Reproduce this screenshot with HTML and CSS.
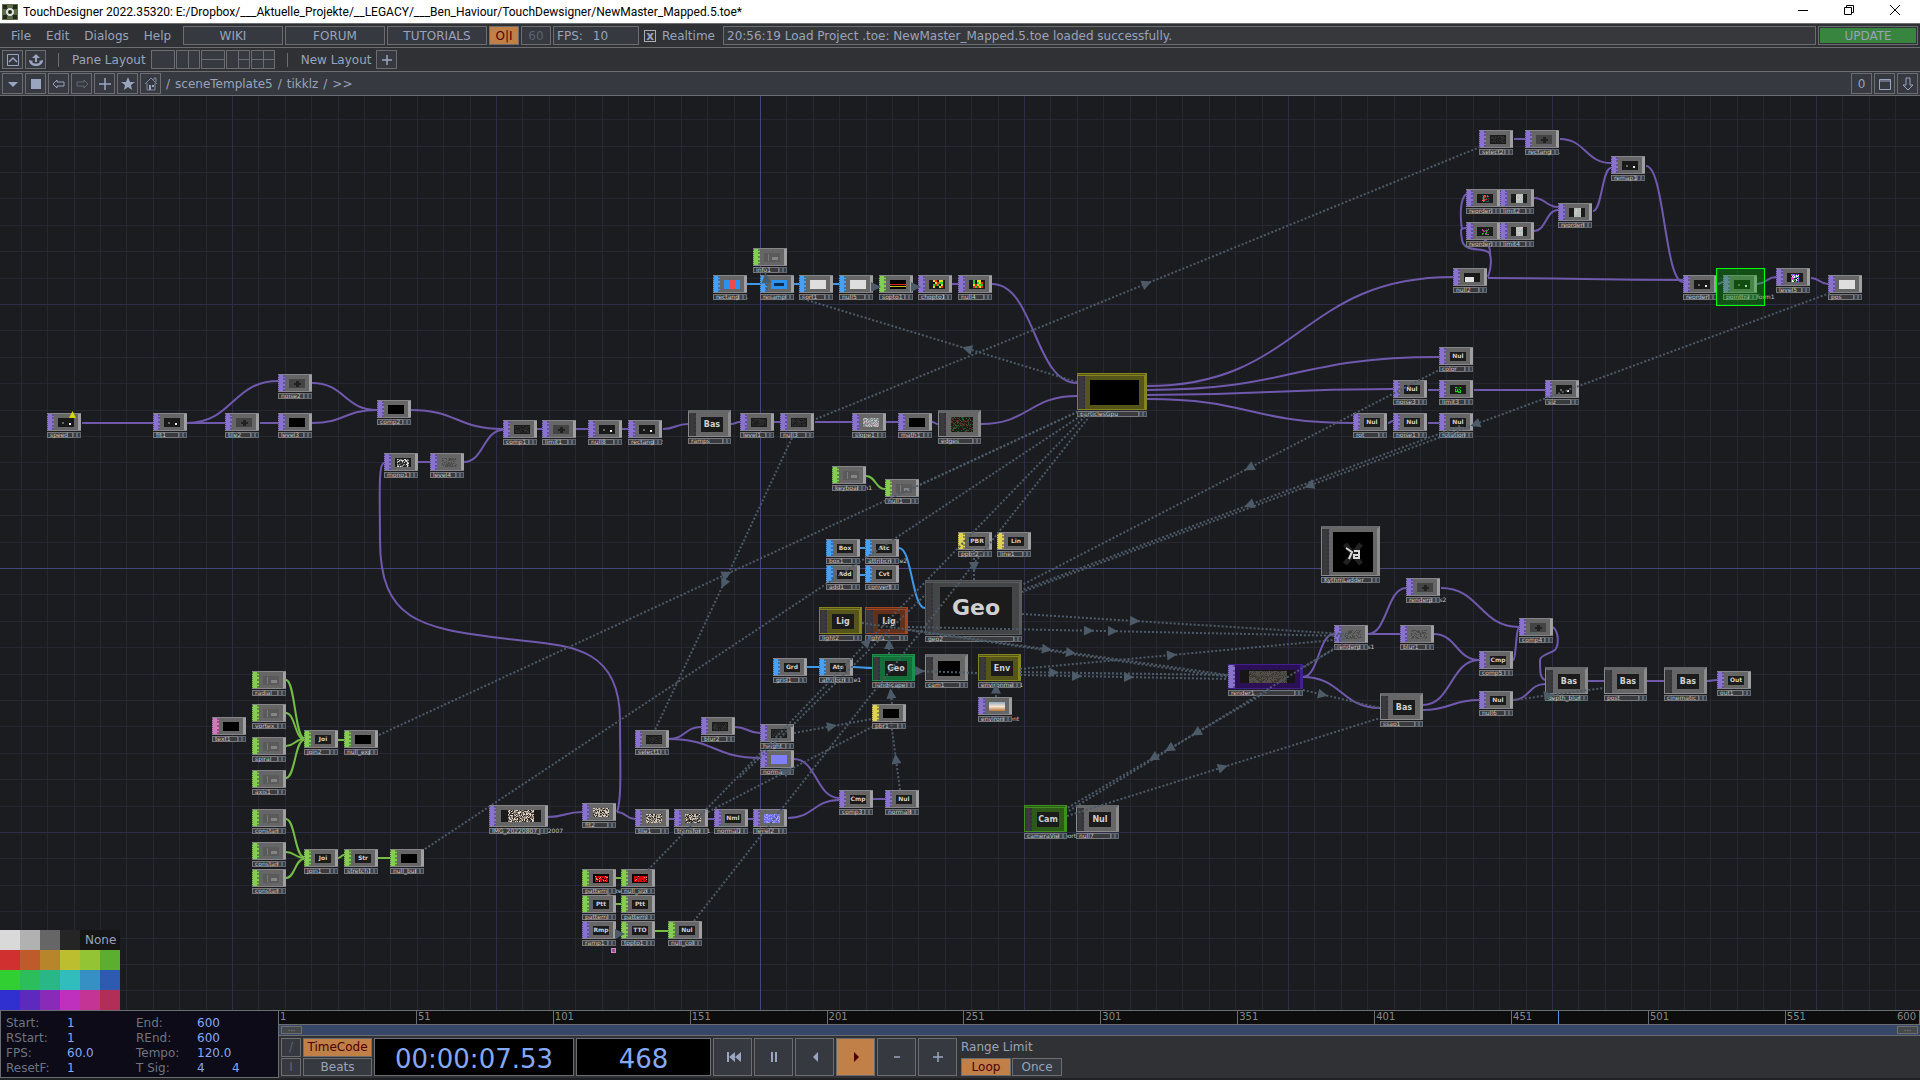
FILE: index.html
```html
<!DOCTYPE html>
<html lang="en">
<head>
    <meta charset="UTF-8">
    <title>TouchDesigner 2022.35320</title>
    <link rel="stylesheet" href="styles.css">
</head>
<body>
    <!-- Window title -->
    <header class="titlebar">
        <svg class="app-icon" width="16" height="16" viewBox="0 0 16 16">
            <rect width="16" height="16" fill="#5d6b4a"/>
            <path d="M3 3l10 10M13 3L3 13" stroke="#15180f" stroke-width="2"/>
            <path d="M1 1h4v4H1zM11 1h4v4h-4zM1 11h4v4H1zM11 11h4v4h-4z" fill="#23281c"/>
            <circle cx="8" cy="8" r="4" fill="#dfe3d6"/>
            <circle cx="8" cy="8" r="2" fill="#23281c"/>
        </svg>
        <span class="window-title">TouchDesigner 2022.35320: E:/Dropbox/___Aktuelle_Projekte/__LEGACY/___Ben_Haviour/TouchDewsigner/NewMaster_Mapped.5.toe*</span>
        <div class="window-buttons">
            <button aria-label="Minimize"><svg width="12" height="12"><path d="M1 6.5h10" stroke="#000"/></svg></button>
            <button aria-label="Restore"><svg width="12" height="12" fill="none" stroke="#000"><path d="M1.5 3.5h7v7h-7zM3.5 3.5v-2h7v7h-2"/></svg></button>
            <button aria-label="Close"><svg width="12" height="12"><path d="M1 1l10 10M11 1L1 11" stroke="#000"/></svg></button>
        </div>
    </header>

    <!-- Menu bar -->
    <nav class="bar menubar">
        <div class="menus">
            <button class="menu">File</button>
            <button class="menu">Edit</button>
            <button class="menu">Dialogs</button>
            <button class="menu">Help</button>
        </div>
        <button class="box wide">WIKI</button>
        <button class="box wide">FORUM</button>
        <button class="box wide">TUTORIALS</button>
        <button class="box small active">O|I</button>
        <button class="box small dim">60</button>
        <div class="box fps"><span>FPS:</span><span>10</span></div>
        <label class="realtime" for="realtime"><input type="checkbox" id="realtime" checked>Realtime</label>
        <div class="box status">20:56:19 Load Project .toe: NewMaster_Mapped.5.toe loaded successfully.</div>
        <button class="box update">UPDATE</button>
    </nav>

    <!-- Pane layouts -->
    <div class="bar layoutbar">
        <button class="box icon" aria-label="Palette"><svg width="14" height="14" fill="none" stroke="#9aa5c0"><path d="M1.5 1.5h11v11h-11z"/><path d="M3 9l4-4 4 4" stroke-width="1.5"/></svg></button>
        <button class="box icon" aria-label="Export"><svg width="14" height="14"><path d="M6 4h2v5h-2zM3 5l4-4 4 4z" fill="#9aa5c0"/><path d="M0 7l4 1-1 1c2 2 6 2 8 0l-1-1 4-1c0 8-14 8-14 0z" fill="#9aa5c0"/></svg></button>
        <span class="divider"></span>
        <span class="caption">Pane Layout</span>
        <div class="layouts">
            <button class="box layout" aria-label="Single"></button>
            <button class="box layout" aria-label="Left right"><svg width="22" height="18"><path d="M11.5 0v18" stroke="#6b6d70"/></svg></button>
            <button class="box layout" aria-label="Top bottom"><svg width="22" height="18"><path d="M0 8.5h22" stroke="#6b6d70"/></svg></button>
            <button class="box layout" aria-label="Three"><svg width="22" height="18"><path d="M11.5 0v18M11 8.5h11" stroke="#6b6d70"/></svg></button>
            <button class="box layout" aria-label="Quad"><svg width="22" height="18"><path d="M11.5 0v18M0 8.5h22" stroke="#6b6d70"/></svg></button>
        </div>
        <span class="divider"></span>
        <span class="caption">New Layout</span>
        <button class="box icon" aria-label="Add layout"><svg width="14" height="14"><path d="M7 2v10M2 7h10" stroke="#9aa5c0" stroke-width="1.5"/></svg></button>
    </div>

    <!-- Network path -->
    <div class="bar pathbar">
        <button class="box icon" aria-label="Pane type"><svg width="14" height="14"><path d="M2 5h10L7 10z" fill="#9aa5c0"/></svg></button>
        <button class="box icon" aria-label="Stop"><svg width="14" height="14"><path d="M2 2h10v10H2z" fill="#9aa5c0"/></svg></button>
        <button class="box icon" aria-label="Back"><svg width="14" height="14" fill="none" stroke="#9aa5c0"><path d="M1 7l4-4v2h7v4H5v2z"/></svg></button>
        <button class="box icon" aria-label="Forward"><svg width="14" height="14" fill="none" stroke="#626978"><path d="M13 7L9 3v2H2v4h7v2z"/></svg></button>
        <button class="box icon" aria-label="Add bookmark"><svg width="14" height="14"><path d="M7 1v12M1 7h12" stroke="#9aa5c0" stroke-width="1.5"/></svg></button>
        <button class="box icon" aria-label="Bookmarks"><svg width="14" height="14"><path d="M7 0l2 5h5l-4 3 1 5-4-3-4 3 1-5-4-3h5z" fill="#9aa5c0"/></svg></button>
        <button class="box icon" aria-label="Home"><svg width="14" height="14"><path d="M1 7l6-6 6 6M3 6v7h8V6M10 3V1h2v4" fill="none" stroke="#7f889c"/><path d="M5 8h2v5H5zM8 8h2v2H8z" fill="#9aa5c0"/></svg></button>
        <div class="crumbs"><span>/</span><a href="#">sceneTemplate5</a><span>/</span><a href="#">tikklz</a><span>/</span><span>&gt;&gt;</span></div>
        <button class="box icon">0</button>
        <button class="box icon" aria-label="Maximize"><svg width="14" height="14" fill="none" stroke="#9aa5c0"><path d="M1.5 2.5h11v10h-11zM1 4h12"/></svg></button>
        <button class="box icon" aria-label="Split down"><svg width="14" height="14" fill="none" stroke="#9aa5c0"><path d="M5 1h4v7h3l-5 5-5-5h3z"/></svg></button>
    </div>

    <!-- Network editor -->
    <main class="network">
        <div class="world">
            <svg class="grid" width="4000" height="2400"></svg>
            <svg class="wires" width="4000" height="2400"></svg>
            <div class="nodes"></div>
            <svg class="links" width="4000" height="2400"></svg>
        </div>
        <div class="palette"></div>
    </main>

    <!-- Timeline -->
    <footer class="timeline">
        <form class="settings">
            <label for="start">Start:</label><input id="start" value="1">
            <label for="end">End:</label><input id="end" value="600">
            <label for="rstart">RStart:</label><input id="rstart" value="1">
            <label for="rend">REnd:</label><input id="rend" value="600">
            <label for="rate">FPS:</label><input id="rate" value="60.0">
            <label for="tempo">Tempo:</label><input id="tempo" value="120.0">
            <label for="resetf">ResetF:</label><input id="resetf" value="1">
            <label for="tsig">T Sig:</label><span class="signature"><input id="tsig" value="4"><input aria-label="Beat unit" value="4"></span>
        </form>
        <div class="transport">
            <div class="ruler"></div>
            <div class="range"><span class="handle">...</span><span class="handle">...</span></div>
            <div class="controls">
                <div class="stack units">
                    <button class="box dim">/</button>
                    <button class="box dim">I</button>
                </div>
                <div class="stack modes">
                    <button class="box active">TimeCode</button>
                    <button class="box">Beats</button>
                </div>
                <output class="display timecode">00:00:07.53</output>
                <output class="display frame">468</output>
                <div class="playback">
                    <button class="box" aria-label="Jump to start"><svg width="16" height="14" fill="#9aa5c0"><path d="M2 2h2v10H2zM10 2v10L4 7zM16 2v10l-6-5z"/></svg></button>
                    <button class="box" aria-label="Pause"><svg width="16" height="14" fill="#9aa5c0"><path d="M5 2h2v10H5zM9 2h2v10H9z"/></svg></button>
                    <button class="box" aria-label="Play reverse"><svg width="16" height="14" fill="#9aa5c0"><path d="M11 2v10L6 7z"/></svg></button>
                    <button class="box active" aria-label="Play"><svg width="16" height="14" fill="#4d0000"><path d="M6 2v10l5-5z"/></svg></button>
                    <button class="box" aria-label="Step back"><svg width="16" height="14"><path d="M5 7h6" stroke="#9aa5c0" stroke-width="1.5"/></svg></button>
                    <button class="box" aria-label="Step forward"><svg width="16" height="14"><path d="M8 2v10M3 7h10" stroke="#9aa5c0" stroke-width="1.5"/></svg></button>
                </div>
                <div class="limit">
                    <span>Range Limit</span>
                    <div class="limit-buttons">
                        <button class="box active">Loop</button>
                        <button class="box">Once</button>
                    </div>
                </div>
            </div>
        </div>
    </footer>

    <script src="script.js"></script>
</body>
</html>
```
FILE: styles.css
```css
* {
    box-sizing: border-box;
}

body {
    display: flex;
    flex-direction: column;
    height: 100vh;
    margin: 0;
    overflow: hidden;
    background-color: #2f3135;
    color: #9aa3ba;
    font-family: "DejaVu Sans", Verdana, sans-serif;
    font-size: 12px;
}

button, input {
    padding: 0;
    border: none;
    background: none;
    color: inherit;
    font: inherit;
}

svg {
    display: block;
}

/* Title bar */
.titlebar {
    display: flex;
    align-items: center;
    gap: 5px;
    height: 23px;
    padding-left: 2px;
    background-color: #ffffff;
    color: #000000;
}

.window-title {
    flex: 1;
    font-family: Roboto, "Segoe UI", sans-serif;
    font-size: 12px;
    white-space: nowrap;
}

.window-buttons {
    display: flex;
    align-self: flex-start;
    padding-right: 2px;
}

.window-buttons button {
    display: grid;
    place-items: center;
    width: 46px;
    height: 20px;
}

/* Tool bars */
.bar {
    display: flex;
    align-items: center;
    gap: 2px;
    height: 24px;
    padding: 0 2px;
    border-top: 1px solid #6b6d70;
    background-color: #2f3135;
    white-space: nowrap;
}

.box {
    display: flex;
    align-items: center;
    justify-content: center;
    height: 19px;
    border: 1px solid #6b6d70;
    background-color: #363940;
}

.box.active {
    background-color: #c08048;
    color: #4d0000;
}

.box.dim {
    color: #5e636e;
}

.menus {
    display: flex;
    gap: 15px;
    width: 179px;
    padding-left: 9px;
}

.wide {
    width: 100px;
}

.small {
    width: 30px;
}

.fps {
    justify-content: flex-start;
    gap: 10px;
    width: 86px;
    padding-left: 3px;
}

.realtime {
    display: flex;
    align-items: center;
    gap: 6px;
    width: 80px;
    padding-left: 3px;
}

.realtime input {
    display: grid;
    place-items: center;
    width: 12px;
    height: 12px;
    margin: 0;
    border: 1px solid #a8adb8;
    appearance: none;
}

.realtime input:checked::before {
    content: "x";
    font-weight: bold;
    line-height: 8px;
}

.status {
    flex: 1;
    justify-content: flex-start;
    padding-left: 3px;
    background-color: #37383b;
}

.update {
    width: 100px;
    background-color: #37853f;
    box-shadow: inset 0 0 0 1px #2f3135;
}

.divider {
    width: 1px;
    height: 14px;
    margin: 0 11px 0 10px;
    background-color: #6b6d70;
}

.caption {
    padding-right: 3px;
}

.layouts {
    display: flex;
    gap: 1px;
}

.layout {
    width: 24px;
}

.icon {
    width: 21px;
}

.pathbar {
    height: 25px;
    border-bottom: 1px solid #6b6d70;
    background-color: #363940;
}

.pathbar .box {
    height: 21px;
}

.crumbs {
    display: flex;
    flex: 1;
    gap: 5px;
    padding-left: 3px;
}

.crumbs a {
    color: inherit;
    text-decoration: none;
}

/* Network editor */
.network {
    position: relative;
    flex: 1;
    overflow: hidden;
    background-color: #1b1c20;
}

.world {
    position: absolute;
    left: 0;
    top: -96px;
}

.grid, .wires, .links {
    position: absolute;
    left: 0;
    top: 0;
    fill: none;
}

.grid .minor { stroke: #262730; }
.grid .major { stroke: #2e2d49; }
.grid .origin { stroke: #45447c; }

.wires path { stroke-width: 2; }
.wires .top { stroke: #7059ad; }
.wires .chop { stroke: #75bd45; }
.wires .sop { stroke: #3f98ea; }

.links path {
    stroke: #4d5b69;
    stroke-width: 2;
    stroke-dasharray: 2 2;
}

.links polygon { fill: #4d5b69; }

.node {
    position: absolute;
}

.body {
    display: flex;
    border-top: 1px solid #85858a;
    border-bottom: 1px solid #85858a;
    background-color: #666666;
}

.ports {
    width: 7px;
    border-right: 2px dotted rgba(40, 35, 70, 0.4);
    border-left: 1px dotted rgba(30, 30, 40, 0.5);
    background-color: #8a72cf;
}

.chop .ports { background-color: #84cc52; }
.sop .ports { background-color: #47a0f2; }
.mat .ports { background-color: #dfd056; }
.dat .ports { background-color: #cf7abb; }

.face {
    display: flex;
    flex: 1;
    align-items: center;
    justify-content: center;
}

.screen {
    display: grid;
    place-items: center;
    width: 16px;
    height: 9px;
    overflow: hidden;
    background-color: #1b1b1b;
    color: #d0d0d0;
    font-size: 6px;
    font-weight: bold;
    line-height: 8px;
}

.output {
    width: 3px;
    background-color: #a0a0a2;
}

.tag {
    display: flex;
    height: 6px;
    margin-top: 1px;
    background-color: #3a3b3e;
    color: #c6c6c6;
    font-size: 6px;
    white-space: nowrap;
}

.tag span {
    flex: 1;
    width: 0;
    padding-left: 2px;
    border: 1px solid #77777c;
    line-height: 3px;
}

.tag i {
    width: 4px;
    border: 1px solid #66676c;
    background-color: #33404f;
}

/* Component nodes */
.comp .body {
    border: 1px solid #8b8b8b;
    border-top: 3px double #66676b;
    border-right: 3px solid #8b8b8b;
}

.comp .ports { background-color: #3a3a3c; }
.comp .output { width: 0; }

.comp .screen {
    width: 70%;
    height: 64%;
    font-size: 8px;
}

.geo .body {
    border-color: #5a5b5d;
    background-color: #444546;
}

.geo .screen {
    width: 84%;
    height: 86%;
    font-size: 22px;
}

.square .screen {
    width: 82%;
    height: 86%;
    background-color: #000000;
}

.yellow .body { border-color: #85841c; background-color: #55541a; }
.orange .body { border-color: #a04722; background-color: #63301b; }
.emerald .body { border-color: #19914a; background-color: #136e38; }
.lime .body { border-color: #418f1e; background-color: #2d5a18; }
.wide-comp .screen { width: 82%; height: 76%; background-color: #000000; }
.violet .body { border-color: #43208f; background-color: #2b1056; }
.violet .screen { width: 84%; height: 60%; }
.violet .output { background-color: #43208f; }

/* Viewer contents */
.black .screen { background-color: #020202; }
.white .screen { background-color: #dedede; }
.faint .screen { background: linear-gradient(#858585, #858585) 8px 4px / 6px 3px no-repeat, linear-gradient(#7a7a7a, #7a7a7a) 4px 1px / 1px 7px no-repeat, #5a5a5a; }
.blot .screen { background: linear-gradient(#222, #222) 5px 4px / 7px 2px no-repeat, linear-gradient(#222, #222) 7px 2px / 3px 6px no-repeat, #444; }
.dots .screen { background: linear-gradient(#e8e8e8, #e8e8e8) 11px 5px / 2px 2px no-repeat, linear-gradient(#666, #666) 4px 4px / 2px 2px no-repeat, #191919; }
.half .screen { background: linear-gradient(#e0e0e0, #e0e0e0) 1px 4px / 9px 5px no-repeat, #191919; }
.bluered .screen { background: linear-gradient(90deg, #2a92f0 5px, #f04a4a 5px 11px, #2a92f0 11px); }
.bluebox .screen { background-color: #0d2c4d; border: 3px solid #2a92f0; }
.lines .screen { background: linear-gradient(#000 4px, #d22 4px 5px, #000 5px 6px, #cb2 6px 7px, #000 7px); }
.red .screen { background-color: #050505; }
.normal .screen { background-color: #7f80f8; }
.photo .screen { background: linear-gradient(#8fa9bf, #f3e6d3 50%, #b97636); }
.render .screen { background-color: #161616; }

.wideimage .screen {
    width: 40px;
    height: 12px;
}

.selection {
    position: absolute;
    border: 1px solid #00ff00;
    background-color: rgba(0, 200, 0, 0.3);
}

.warning {
    position: absolute;
    width: 7px;
    height: 7px;
    background-color: #d8d800;
    clip-path: polygon(50% 0, 100% 100%, 0 100%);
}

.docked {
    position: absolute;
    width: 5px;
    height: 5px;
    border: 1px solid #e080c8;
    background-color: #9c4a86;
}

/* Colour palette */
.palette {
    position: absolute;
    left: 0;
    bottom: 0;
    display: grid;
    grid-template-columns: repeat(6, 20px);
    grid-auto-rows: 20px;
}

.palette .none {
    grid-column: span 2;
    padding-left: 5px;
    background-color: #151515;
    line-height: 20px;
    text-align: left;
}

/* Timeline */
.timeline {
    display: flex;
    height: 70px;
    padding-bottom: 2px;
    background-color: #202124;
}

.settings {
    display: grid;
    grid-template-columns: 61px 69px 61px 1fr;
    grid-auto-rows: 15px;
    align-content: center;
    width: 279px;
    padding: 4px 0 0 5px;
    border: 1px solid #6b6d70;
    background-color: #0c0b17;
    color: #6d7583;
    line-height: 15px;
}

.settings input {
    width: 100%;
    min-width: 0;
    color: #84a8f5;
}

.signature {
    display: grid;
    grid-template-columns: 35px 35px;
}

.transport {
    display: flex;
    flex: 1;
    flex-direction: column;
    background-color: #2f3135;
}

.ruler {
    position: relative;
    height: 15px;
    border: 1px solid #6b6d70;
    border-left: none;
    background-color: #0d0d0d;
    color: #85878b;
    font-size: 10px;
    line-height: 11px;
}

.ruler span {
    position: absolute;
    top: 0;
    height: 100%;
    padding-left: 1px;
    border-left: 1px solid #6b6d70;
}

.ruler span:first-child {
    border: none;
}

.ruler span.last {
    right: 3px;
    border: none;
}

.ruler span.playhead {
    border-color: #5d8fe0;
}

.range {
    display: flex;
    justify-content: space-between;
    height: 11px;
    padding: 1px 2px;
    border-bottom: 1px solid #6b6d70;
    background-color: #364767;
}

.handle {
    width: 21px;
    border: 1px solid #6b6d70;
    background-color: #47484a;
    color: #8a8b8e;
    font-size: 8px;
    line-height: 3px;
    text-align: center;
}

.controls {
    display: flex;
    flex: 1;
    gap: 2px;
    padding: 2px;
}

.stack {
    display: grid;
    gap: 1px;
}

.stack .box, .playback .box {
    height: auto;
}

.units {
    width: 20px;
}

.modes {
    width: 69px;
}

.display {
    display: grid;
    place-items: center;
    padding-top: 4px;
    border: 1px solid #6b6d70;
    background-color: #000000;
    color: #84a8f5;
    font-size: 26px;
    line-height: 30px;
}

.timecode {
    width: 200px;
}

.frame {
    width: 135px;
}

.playback {
    display: flex;
    gap: 2px;
}

.playback .box {
    width: 39px;
}

.limit {
    display: flex;
    flex-direction: column;
    justify-content: space-between;
    padding: 2px 0 0 2px;
}

.limit-buttons {
    display: flex;
    gap: 1px;
}

.limit-buttons .box {
    width: 50px;
    height: 18px;
}
```
FILE: script.js
```js
// [classes, x, y, label, text on the viewer]
const nodes = [
    ['top murk', 1479, 130, 'select2'], ['top blot', 1525, 130, 'rectangle1'],
    ['top dots', 1611, 156, 'remap1'],
    ['top reddots', 1466, 189, 'reorder2'], ['top pale', 1500, 189, 'limit2'],
    ['top greendots', 1466, 222, 'reorder3'], ['top pale', 1500, 222, 'limit4'],
    ['top pale', 1558, 203, 'reorder6'], ['top half', 1453, 268, 'null2'],
    ['top dots', 1683, 275, 'reorder1'], ['top dots', 1723, 275, 'pointtransform1'],
    ['top colour', 1776, 268, 'level5'], ['top white', 1828, 275, 'pos'],

    ['top', 1439, 347, 'color', 'Nul'], ['top', 1393, 380, 'noise3', 'Nul'],
    ['top greenblob', 1439, 380, 'limit3'], ['top dots', 1545, 380, 'siz'],
    ['top', 1353, 413, 'rot', 'Nul'], ['top', 1393, 413, 'noise1', 'Nul'], ['top', 1439, 413, 'rotation', 'Nul'],

    ['top dots', 47, 413, 'speed'], ['top dots', 153, 413, 'fit1'], ['top blot', 225, 413, 'tile2'],
    ['top black', 278, 413, 'level3'], ['top blot', 278, 374, 'noise2'], ['top black', 377, 400, 'comp2'],
    ['top murk', 503, 420, 'comp1'], ['top blot', 542, 420, 'limit1'], ['top dots', 588, 420, 'null8'],
    ['top dots', 628, 420, 'rectangle2'], ['top mono', 384, 453, 'mono1'], ['top greynoise', 430, 453, 'level4'],

    ['chop faint', 753, 248, 'info1'], ['sop bluered', 713, 275, 'rectangle1'], ['sop bluebox', 760, 275, 'resample1'],
    ['sop white', 799, 275, 'sort1'], ['sop white', 839, 275, 'null5'], ['chop lines', 879, 275, 'sopto1'],
    ['top redgreen', 918, 275, 'chopto1'], ['top redgreen', 958, 275, 'null4'],
    ['top murk', 740, 413, 'level1'], ['top murk', 780, 413, 'null3'],
    ['top slope', 852, 413, 'slope1'], ['top black', 898, 413, 'math1'],
    ['chop faint', 832, 466, 'keyboardin1'], ['chop faint', 885, 479, 'null1'],

    ['sop', 826, 539, 'box1', 'Box'], ['sop', 865, 539, 'attribcreate2', 'Atc'],
    ['sop', 826, 565, 'add1', 'Add'], ['sop', 865, 565, 'convert1', 'Cvt'],
    ['mat', 958, 532, 'ppbr2', 'PBR'], ['mat', 997, 532, 'line1', 'Lin'],
    ['sop', 773, 658, 'grid1', 'Grd'], ['sop', 819, 658, 'attribcreate1', 'Atc'],
    ['top photo', 978, 697, 'environment'], ['mat black', 872, 704, 'pbr1'],
    ['top murk', 760, 724, 'height'], ['top normal', 760, 750, 'normal'],
    ['top', 839, 790, 'comp3', 'Cmp'], ['top', 885, 790, 'normal6', 'Nul'],

    ['top blot', 1406, 578, 'renderpass2'], ['top greynoise', 1334, 625, 'renderpass1'],
    ['top greynoise', 1400, 625, 'blur1'], ['top blot', 1519, 618, 'comp4'],
    ['top', 1479, 651, 'comp5', 'Cmp'], ['top', 1479, 691, 'null6', 'Nul'], ['top', 1717, 671, 'out1', 'Out'],

    ['dat black', 212, 717, 'text1'], ['chop faint', 252, 671, 'radial'], ['chop faint', 252, 704, 'vortex'],
    ['chop faint', 252, 737, 'spiral'], ['chop faint', 252, 770, 'axis1'],
    ['chop', 304, 730, 'join2', 'Joi'], ['chop black', 344, 730, 'null_expro'],
    ['chop faint', 252, 809, 'constant2'], ['chop faint', 252, 842, 'constant3'], ['chop faint', 252, 869, 'constant4'],
    ['chop', 304, 849, 'join1', 'Joi'], ['chop', 344, 849, 'stretch1', 'Str'], ['chop black', 390, 849, 'null_burn'],

    ['top noise', 582, 803, 'fit2'], ['top noise', 635, 809, 'tile1'], ['top noise', 674, 809, 'transform1'],
    ['top', 714, 809, 'normal2', 'Nml'], ['top normalnoise', 753, 809, 'level2'],
    ['top murk', 635, 730, 'select1'], ['top murk', 701, 717, 'blur2'],
    ['chop red', 582, 869, 'pattern_size'], ['chop red', 621, 869, 'null_size'],
    ['chop', 582, 895, 'pattern1', 'Ptt'], ['chop', 621, 895, 'pattern2', 'Ptt'],
    ['top', 582, 921, 'ramp1', 'Rmp'], ['chop', 621, 921, 'topto1', 'TTO'], ['chop', 668, 921, 'null_color', 'Nul'],

    // components and wide operators also carry width and height
    ['comp', 688, 410, 'ramps', 'Bas', 43, 27], ['comp edges', 938, 410, 'edges', '', 43, 27],
    ['comp yellow wide-comp', 1077, 373, 'particlesGpu', '', 70, 37],
    ['comp geo', 925, 580, 'geo2', 'Geo', 97, 55],
    ['comp yellow', 819, 607, 'light2', 'Lig', 43, 27], ['comp orange', 865, 607, 'light1', 'Lig', 43, 27],
    ['comp emerald', 872, 654, 'landscape', 'Geo', 43, 27], ['comp black', 925, 654, 'cam1', '', 43, 27],
    ['comp yellow', 978, 654, 'environment1', 'Env', 43, 27],
    ['comp square', 1321, 526, 'KythmLadder', '', 59, 50],
    ['comp', 1380, 693, 'ssao1', 'Bas', 43, 27], ['comp', 1545, 667, 'depth_blur', 'Bas', 43, 27],
    ['comp', 1604, 667, 'post', 'Bas', 43, 27], ['comp', 1664, 667, 'cinematic', 'Bas', 43, 27],
    ['comp lime', 1024, 805, 'cameraViewport', 'Cam', 43, 27], ['comp', 1076, 805, 'null7', 'Nul', 43, 27],
    ['top violet render', 1228, 664, 'render1', '', 75, 25],
    ['top wideimage', 489, 805, 'IMG_20220807_142007', '', 59, 22]
];

// grainy viewers: [x, y, width, height, pixel size, colours]
const grain = {
    murk: [1, 1, 14, 7, 1, ['#1b1b1b', '#262626', '#303030']],
    noise: [0, 0, 16, 9, 1, ['#2e2823', '#6d6259', '#a4988c', '#d6cdc2']],
    mono: [2, 1, 12, 8, 1, ['#222', '#ddd', '#888', '#444']],
    slope: [0, 0, 16, 9, 1, ['#8a8a94', '#b09aa8', '#6f8f84', '#c0c0c0']],
    greynoise: [0, 0, 16, 9, 1, ['#4a4a4a', '#5c5c5c', '#686868']],
    reddots: [5, 1, 7, 7, 1, ['#1b1b1b', '#c33', '#333', '#e55', '#255']],
    greendots: [5, 1, 7, 7, 1, ['#1b1b1b', '#3a3', '#333', '#a3a']],
    pale: [5, 0, 7, 9, 1, ['#bbb', '#d6c8c8', '#aac2b8']],
    redgreen: [4, 0, 9, 8, 2, ['#e22', '#2c3', '#dd2', '#111']],
    colour: [4, 1, 8, 8, 1, ['#d3d', '#111', '#48f', '#fff', '#2a4']],
    greenblob: [5, 2, 6, 6, 1, ['#18d018', '#18d018', '#104010']],
    normalnoise: [0, 0, 16, 9, 1, ['#7f80f8', '#a9a2ff', '#6a66e8']],
    edges: [0, 0, 30, 18, 1, ['#1b1b1b', '#1f2a1b', '#2b5a24', '#1b1b1b', '#5a2a24']],
    red: [2, 2, 13, 6, 1, ['#d80000', '#e01010', '#d80000', '#d80000', '#f08080', '#300']],
    render: [9, 1, 38, 12, 1, ['#4b4b4b', '#555049', '#3c352a']],
    wideimage: [7, 0, 26, 12, 1, ['#2e2823', '#6d6259', '#a4988c', '#e2dacf']]
};

// [family, x1, y1, x2, y2]
const wires = [
    ['top', 1514, 139, 1525, 139], ['top', 1560, 139, 1611, 163], ['top', 1534, 198, 1558, 207],
    ['top', 1534, 231, 1558, 210], ['top', 1593, 211, 1611, 168], ['top', 1646, 166, 1683, 282],
    ['top', 1488, 278, 1683, 280], ['top', 1757, 284, 1776, 277], ['top', 1811, 278, 1828, 284],
    ['top', 1718, 284, 1723, 282],
    ['top', 1147, 386, 1453, 277], ['top', 1147, 390, 1439, 357], ['top', 1147, 395, 1393, 389],
    ['top', 1147, 399, 1353, 423], ['top', 1428, 390, 1439, 390], ['top', 1474, 390, 1545, 390],
    ['top', 1388, 423, 1393, 421], ['top', 1428, 423, 1439, 423],
    ['top', 82, 423, 153, 423], ['top', 187, 423, 278, 381], ['top', 187, 423, 225, 423],
    ['top', 260, 423, 278, 423], ['top', 312, 383, 377, 410], ['top', 312, 423, 377, 410],
    ['top', 411, 410, 503, 429], ['top', 418, 462, 430, 462], ['top', 464, 462, 503, 430],
    ['top', 537, 429, 542, 429], ['top', 576, 429, 588, 429], ['top', 622, 429, 628, 429],
    ['top', 663, 429, 688, 424], ['top', 731, 424, 740, 422], ['top', 774, 422, 780, 422],
    ['top', 815, 422, 852, 422], ['top', 886, 422, 898, 422], ['top', 932, 422, 938, 424],
    ['top', 981, 424, 1077, 396], ['top', 952, 284, 958, 284], ['top', 992, 284, 1077, 383],
    ['sop', 747, 284, 760, 284], ['sop', 794, 284, 799, 284], ['sop', 833, 284, 839, 284],
    ['chop', 866, 476, 885, 489], ['sop', 860, 548, 865, 548], ['sop', 860, 575, 865, 575],
    ['sop', 899, 548, 925, 608], ['sop', 807, 667, 819, 667], ['sop', 853, 667, 872, 668],
    ['top', 548, 817, 582, 812], ['top', 617, 812, 635, 819], ['top', 669, 819, 674, 819],
    ['top', 708, 819, 714, 819], ['top', 748, 819, 753, 819], ['top', 788, 818, 839, 800],
    ['top', 794, 759, 839, 798], ['top', 873, 799, 885, 799],
    ['top', 669, 739, 701, 727], ['top', 669, 739, 760, 758], ['top', 735, 727, 760, 733],
    ['top', 1303, 677, 1334, 634], ['top', 1303, 677, 1380, 708], ['top', 1368, 634, 1400, 634],
    ['top', 1368, 634, 1406, 588], ['top', 1441, 588, 1519, 627], ['top', 1434, 634, 1479, 660],
    ['top', 1423, 705, 1479, 660], ['top', 1423, 710, 1479, 700], ['top', 1513, 660, 1519, 628],
    ['top', 1513, 700, 1545, 684], ['top', 1588, 681, 1604, 681], ['top', 1647, 681, 1664, 681],
    ['top', 1707, 681, 1717, 680],
    ['chop', 286, 680, 304, 738], ['chop', 286, 713, 304, 739], ['chop', 286, 746, 304, 739],
    ['chop', 286, 778, 304, 740], ['chop', 338, 740, 344, 740],
    ['chop', 286, 819, 304, 857], ['chop', 286, 852, 304, 858], ['chop', 286, 878, 304, 859],
    ['chop', 338, 858, 344, 855], ['chop', 378, 858, 390, 858],
    ['chop', 616, 878, 621, 878], ['chop', 616, 904, 621, 904], ['chop', 655, 931, 668, 931]
];

// wires that loop back behind their source
const loops = [
    'M617 812 C622 800 620 760 620 720 C620 640 560 646 500 638 C420 628 380 620 380 540 C380 500 378 463 384 463',
    'M1488 277 C1492 266 1491 258 1490 254 C1486 246 1464 254 1462 240 C1460 228 1461 228 1466 228',
    'M1462 230 C1460 215 1460 200 1466 194',
    'M1490 256 C1491 240 1482 236 1466 231',
    'M1553 627 C1559 632 1559 645 1555 650 C1550 654 1541 654 1540 660 C1540 672 1540 678 1545 680'
];

// references: [x1, y1, x2, y2, x of each arrow...]
const links = [
    [816, 419, 1480, 147, 1146], [1077, 382, 800, 298, 968], [792, 438, 655, 730, 724],
    [379, 735, 1077, 412, 726], [425, 849, 1085, 413], [648, 870, 1088, 413, 867], [694, 921, 1092, 413],
    [920, 485, 1077, 412], [1445, 367, 1022, 585, 1250], [1460, 426, 1022, 590, 1250], [1830, 293, 1022, 592, 1476, 1310],
    [1022, 614, 1345, 634, 1134], [908, 627, 1345, 636, 1088, 1112], [862, 623, 1228, 675, 1046, 1070],
    [908, 630, 1228, 677], [1020, 669, 1345, 639, 1171],
    [1020, 672, 1228, 675, 1053], [1020, 675, 1228, 679, 1076, 1128],
    [1270, 690, 1067, 808, 1154, 1170], [1340, 645, 1067, 812, 1197], [1067, 816, 1380, 718, 1222],
    [1303, 690, 1380, 708, 1322], [1303, 667, 1345, 643], [1513, 700, 1604, 688, 1548],
    [900, 790, 891, 722, 896], [892, 704, 890, 685, 891], [889, 654, 889, 636, 889],
    [794, 733, 872, 719, 831], [708, 812, 872, 727, 787], [740, 777, 925, 595],
    [974, 550, 974, 582, 974], [915, 671, 978, 673, 919], [996, 697, 996, 682, 996],
    [767, 290, 765, 268, 766], [872, 287, 879, 287, 875], [912, 287, 919, 287, 915], [615, 934, 622, 934, 619]
];

const ticks = [1, 51, 101, 151, 201, 251, 301, 351, 401, 451, 501, 551];

const colours = [
    '#d9d9d9', '#b1b1b1', '#666666', '#252525', 'none',
    '#d03030', '#bf5b2b', '#b8862a', '#bdbd30', '#93c434', '#5bae30',
    '#32cf32', '#2dbe5c', '#2ab788', '#32bdbd', '#3690c4', '#2e5ab0',
    '#3030d0', '#5c2bbd', '#8a2ab8', '#bf30bf', '#c43494', '#b02e58'
];

function drawGrid() {
    const kind = i => i === 0 ? 'origin' : i % 10 === 0 ? 'major' : 'minor';
    const lines = { minor: '', major: '', origin: '' };
    for (let i = -30; i < 120; i++) {
        const x = Math.round(760 + i * 26.4);
        const y = Math.round(568 + i * 26.4);
        lines[kind(i)] += `<path class="${kind(i)}" d="M${x + 0.5} 0V2400M0 ${y + 0.5}H4000"/>`;
    }
    document.querySelector('.grid').innerHTML = lines.minor + lines.major + lines.origin;
}

let seed = 7;

function random() {
    seed = (seed * 16807) % 2147483647;
    return seed / 2147483647;
}

function drawGrain([left, top, w, h, size, tones]) {
    const paths = tones.map(() => '');
    for (let y = top; y < top + h; y += size) {
        for (let x = left; x < left + w; x += size) {
            paths[Math.floor(random() * tones.length)] += `M${x} ${y}h${size}v${size}h-${size}z`;
        }
    }
    return `<svg width="${left * 2 + w}" height="${top * 2 + h}">${paths.map((d, i) => `<path fill="${tones[i]}" d="${d}"/>`).join('')}</svg>`;
}

function drawViewer(type, text) {
    if (type.includes('square')) {
        return '<svg width="40" height="42"><path d="M12 12l16 20M28 12L12 32" stroke="#222" stroke-width="5"/><path d="M13 16l6 4-3 7M21 19h5v7h-5v-3h5" fill="none" stroke="#d8d8d8" stroke-width="2"/></svg>';
    }
    const name = type.split(' ').find(c => grain[c]);
    return name ? drawGrain(grain[name]) : text;
}

function drawNodes() {
    let html = '';
    for (const [type, x, y, label, text = '', w = 34, h = 18] of nodes) {
        html += `<div class="node ${type}" style="left:${x}px;top:${y}px;width:${w}px">
            <div class="body" style="height:${h}px"><span class="ports"></span><span class="face"><span class="screen">${drawViewer(type, text)}</span></span><span class="output"></span></div>
            <div class="tag"><span>${label}</span><i></i><i></i></div>
        </div>`;
    }
    html += '<div class="warning" style="left:69px;top:411px"></div>';
    html += '<div class="docked" style="left:611px;top:948px"></div>';
    html += '<div class="selection" style="left:1716px;top:268px;width:49px;height:38px"></div>';
    document.querySelector('.nodes').innerHTML = html;
}

function drawWires() {
    let html = '';
    for (const [family, x1, y1, x2, y2] of wires) {
        const mid = (x1 + x2) / 2;
        html += `<path class="${family}" d="M${x1} ${y1}C${mid} ${y1} ${mid} ${y2} ${x2} ${y2}"/>`;
    }
    for (const d of loops) {
        html += `<path class="top" d="${d}"/>`;
    }
    document.querySelector('.wires').innerHTML = html;
}

function drawLinks() {
    let html = '';
    for (const [x1, y1, x2, y2, ...arrows] of links) {
        const angle = Math.atan2(y2 - y1, x2 - x1) * 180 / Math.PI;
        html += `<path d="M${x1} ${y1}L${x2} ${y2}"/>`;
        for (const x of arrows) {
            const t = x2 === x1 ? 0.5 : (x - x1) / (x2 - x1);
            const y = y1 + (y2 - y1) * t;
            html += `<polygon points="-4,-5 6,0 -4,5" transform="translate(${x} ${y}) rotate(${angle})"/>`;
        }
    }
    document.querySelector('.links').innerHTML = html;
}

function drawTimeline() {
    const place = frame => (frame - 1) / 599 * 100;
    let html = ticks.map(f => `<span style="left:${place(f)}%">${f}</span>`).join('');
    html += `<span class="playhead" style="left:${place(468)}%"></span><span class="last">600</span>`;
    document.querySelector('.ruler').innerHTML = html;
}

function drawPalette() {
    document.querySelector('.palette').innerHTML = colours.map(c => c === 'none'
        ? '<button class="none">None</button>'
        : `<button aria-label="${c}" style="background-color:${c}"></button>`).join('');
}

drawGrid();
drawNodes();
drawWires();
drawLinks();
drawTimeline();
drawPalette();
```
